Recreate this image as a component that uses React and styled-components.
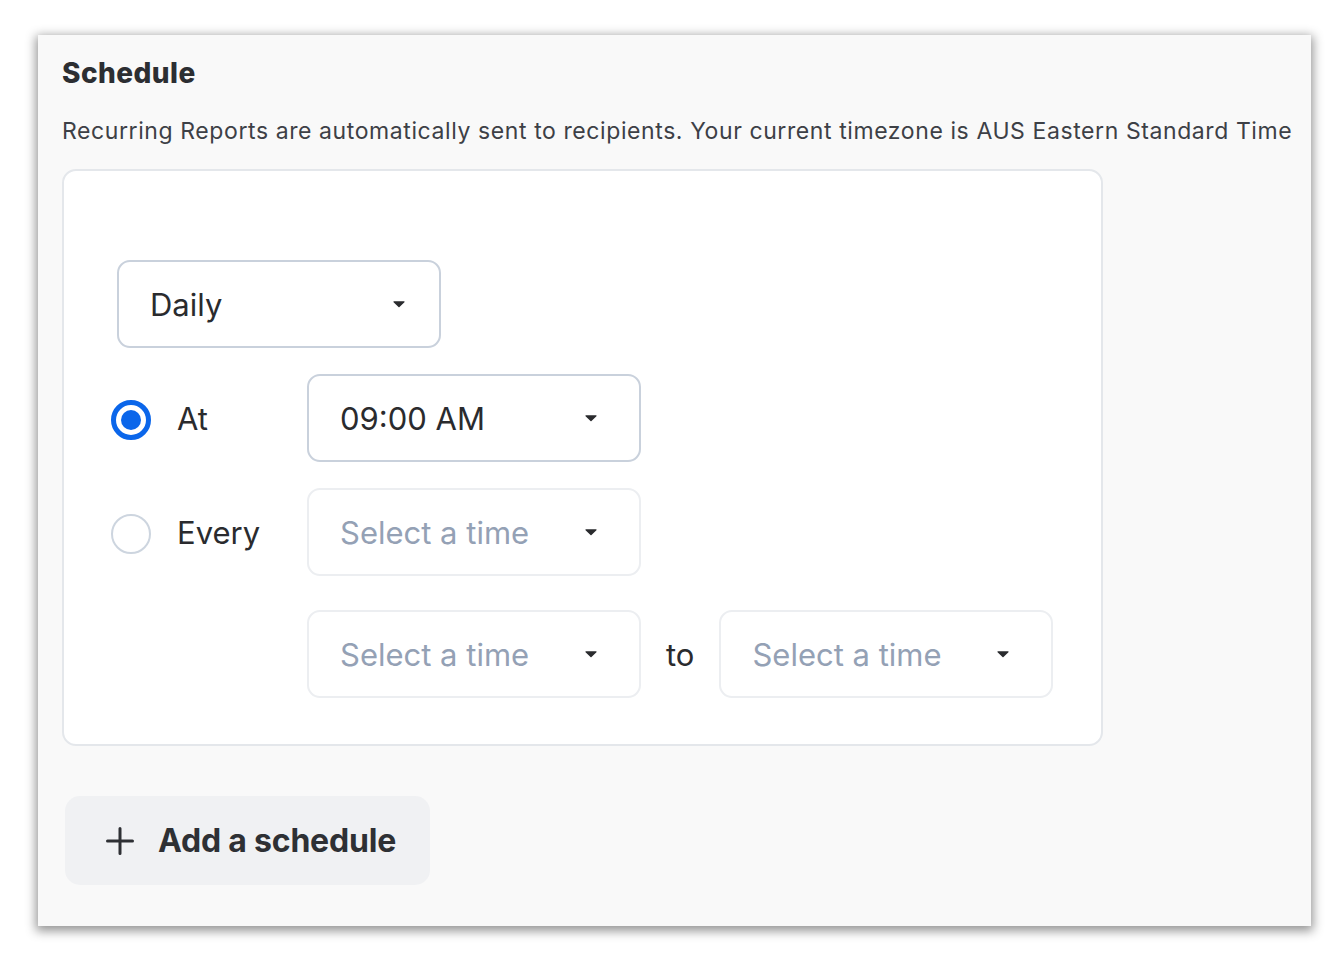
import React from "react";
import styled, { createGlobalStyle } from "styled-components";

const Global = createGlobalStyle`
  html, body { margin: 0; padding: 0; background: #ffffff; }
  body { font-family: Inter, "Noto Sans", sans-serif; -webkit-font-smoothing: antialiased; }
  * { box-sizing: border-box; }
`;

const Page = styled.div`
  padding: 35px 32px 27px 38px;
`;

const Panel = styled.section`
  width: 1273px;
  height: 891px;
  background: #f9f9f9;
  box-shadow: 0 3px 10px 2px rgba(0, 0, 0, 0.42);
  padding: 22px 20px 0 24px;
  display: flex;
  flex-direction: column;
`;

const Title = styled.h2`
  margin: 0;
  font-size: 28px;
  line-height: 32px;
  font-weight: 800;
  color: #2c2e32;
  letter-spacing: 0.45px;
`;

const Description = styled.p`
  margin: 28px 0 0 0;
  font-size: 23px;
  line-height: 28px;
  color: #3d4046;
  letter-spacing: 0.59px;
  white-space: nowrap;
`;

const Card = styled.div`
  margin-top: 24px;
  width: 1041px;
  height: 577px;
  background: #ffffff;
  border: 2px solid #e4e7eb;
  border-radius: 14px;
  padding: 89px 0 0 47px;
  display: flex;
  flex-direction: column;
`;

const Row = styled.div`
  display: flex;
  align-items: center;
  margin-top: ${(p) => p.$gap || 0}px;
`;

const LabelCell = styled.label`
  width: 196px;
  display: flex;
  align-items: center;
  gap: 26px;
  font-size: 31px;
  color: #2a2b2e;
`;

const Radio = styled.span`
  width: 40px;
  height: 40px;
  margin-top: 4px;
  border-radius: 50%;
  flex: none;
  display: flex;
  align-items: center;
  justify-content: center;
  border: ${(p) => (p.$checked ? "5px solid #0b66ea" : "2px solid #cdd5df")};
  background: #ffffff;
  &::after {
    content: "";
    display: ${(p) => (p.$checked ? "block" : "none")};
    width: 20px;
    height: 20px;
    border-radius: 50%;
    background: #0b66ea;
  }
`;

const Select = styled.div`
  width: ${(p) => p.$width || 334}px;
  height: ${(p) => p.$height || 88}px;
  margin-left: ${(p) => p.$offset || 0}px;
  border-radius: 13px;
  border: 2px solid ${(p) => (p.$muted ? "#eceef1" : "#c9d1dc")};
  background: #ffffff;
  display: flex;
  align-items: center;
  justify-content: space-between;
  padding: 0 ${(p) => p.$caretPad || 42}px 0 31px;
  font-size: 31px;
  color: ${(p) => (p.$placeholder ? "#94a1b5" : "#2a2b2e")};
`;

const To = styled.span`
  font-size: 31px;
  color: #2a2b2e;
  margin: 0 25px 0 25px;
`;

const Caret = () => (
  <svg width="12" height="8" viewBox="0 0 12 8">
    <path d="M1 1.2 h10 a0.6 0.6 0 0 1 0.45 1 L6.5 7.1 a0.7 0.7 0 0 1 -1 0 L0.55 2.2 A0.6 0.6 0 0 1 1 1.2z" fill="#2a2b2e" />
  </svg>
);

const AddButton = styled.button`
  margin: 50px 0 0 3px;
  width: 365px;
  height: 89px;
  border: none;
  border-radius: 15px;
  background: #f0f1f3;
  display: flex;
  align-items: center;
  gap: 24px;
  padding: 0 0 0 41px;
  font-family: inherit;
  font-size: 32px;
  font-weight: 700;
  color: #2e3034;
  letter-spacing: -0.2px;
`;

const Plus = () => (
  <svg width="28" height="28" viewBox="0 0 28 28">
    <path d="M14 1.5 V26.5 M1.5 14 H26.5" stroke="#2e3034" strokeWidth="3" strokeLinecap="round" />
  </svg>
);

export default function App() {
  return (
    <>
      <Global />
      <Page>
        <Panel>
          <Title>Schedule</Title>
          <Description>
            Recurring Reports are automatically sent to recipients. Your current timezone is AUS Eastern Standard Time
          </Description>
          <Card>
            <Row>
              <Select $width={324} $height={88} $offset={6} $caretPad={34}>
                <span>Daily</span>
                <Caret />
              </Select>
            </Row>
            <Row $gap={26}>
              <LabelCell>
                <Radio $checked />
                At
              </LabelCell>
              <Select>
                <span>09:00 AM</span>
                <Caret />
              </Select>
            </Row>
            <Row $gap={26}>
              <LabelCell>
                <Radio />
                Every
              </LabelCell>
              <Select $muted $placeholder>
                <span>Select a time</span>
                <Caret />
              </Select>
            </Row>
            <Row $gap={34}>
              <LabelCell />
              <Select $muted $placeholder>
                <span>Select a time</span>
                <Caret />
              </Select>
              <To>to</To>
              <Select $muted $placeholder>
                <span>Select a time</span>
                <Caret />
              </Select>
            </Row>
          </Card>
          <AddButton>
            <Plus />
            Add a schedule
          </AddButton>
        </Panel>
      </Page>
    </>
  );
}
